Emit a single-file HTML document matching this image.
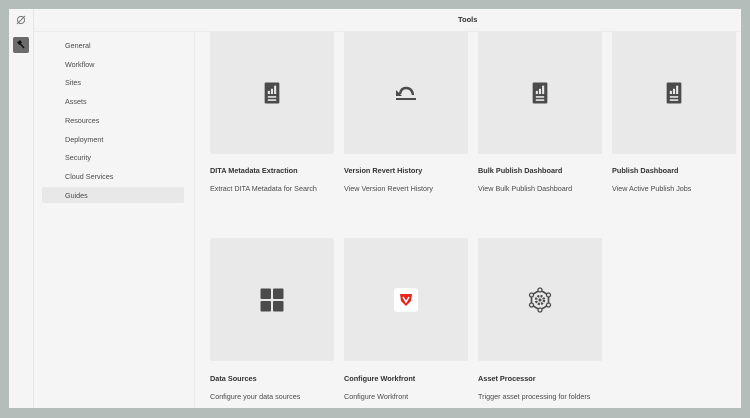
<!DOCTYPE html>
<html><head><style>
*{margin:0;padding:0;box-sizing:border-box}
body{width:750px;height:418px;background:#b4bdb9;position:relative;overflow:hidden;font-family:"Liberation Sans",sans-serif;color:#2c2c2c}
.app{position:absolute;left:9px;top:9px;width:732px;height:399px;background:#f5f5f5;overflow:hidden}
.rail{position:absolute;left:0;top:0;width:25px;height:399px;background:#f5f5f5;border-right:1px solid #e6e6e6}
.hdr{position:absolute;left:25px;top:0;right:0;height:23px;border-bottom:1px solid #ececec;background:#f5f5f5}
.hdr span{position:absolute;left:424px;top:6px;font-size:7.5px;font-weight:bold;color:#333}
.nav{position:absolute;left:25px;top:23px;width:161px;height:376px;border-right:1px solid #ececec}
.nav div{position:absolute;left:31px;font-size:7.2px;color:#4b4b4b}
.sel{position:absolute;left:8px;top:155px;width:142px;height:16px;background:#e8e8e8;border-radius:2px}
.card{position:absolute;width:124px;height:123px;background:#e9e9e9;border-radius:2px}
.t{position:absolute;font-size:7.3px;font-weight:bold;color:#333}
.d{position:absolute;font-size:7.2px;color:#4b4b4b}
.ic{position:absolute;left:50%;top:50%;transform:translate(-50%,-50%)}
</style></head><body><div class="app">
<div class="rail">
<svg style="position:absolute;left:7px;top:6px" width="10" height="10" viewBox="0 0 10 10"><circle cx="5" cy="5" r="3.6" fill="none" stroke="#777" stroke-width="1"/><line x1="1" y1="9" x2="9" y2="1" stroke="#777" stroke-width="1"/></svg>
<div style="position:absolute;left:4px;top:28px;width:16px;height:16px;background:#6b6b6b;border-radius:2px"></div>
<svg style="position:absolute;left:7px;top:31px" width="10" height="10" viewBox="0 0 10 10"><path d="M2 2.5L4 1L5 2.5L3.5 4Z M3.5 3L8 8" stroke="#111" stroke-width="1.4" fill="#111"/></svg>
</div>
<div class="hdr"><span>Tools</span></div>
<div class="nav">
<span class="sel"></span>
<div style="top:9px">General</div><div style="top:28px">Workflow</div><div style="top:46px">Sites</div><div style="top:65px">Assets</div><div style="top:84px">Resources</div><div style="top:103px">Deployment</div><div style="top:121px">Security</div><div style="top:140px">Cloud Services</div><div style="top:159px">Guides</div>
</div>

<div class="card" style="left:201px;top:22px"><svg class="ic" width="15" height="21" viewBox="0 0 14 20"><rect width="14" height="20" rx="1" fill="#4b4b4b"/><rect x="3" y="8" width="2" height="3" fill="#e9e9e9"/><rect x="6" y="6" width="2" height="5" fill="#e9e9e9"/><rect x="9" y="3" width="2" height="8" fill="#e9e9e9"/><rect x="3" y="13" width="8" height="1.5" fill="#e9e9e9"/><rect x="3" y="16" width="8" height="1.5" fill="#e9e9e9"/></svg></div>
<div class="card" style="left:335px;top:22px"><svg class="ic" width="22" height="16" viewBox="0 0 22 16"><path d="M5 9Q6 3 11 3Q17 3 18 10" fill="none" stroke="#4b4b4b" stroke-width="2.4"/><path d="M1 5L7 11L1 11Z" fill="#4b4b4b"/><rect x="1" y="13" width="20" height="2" fill="#4b4b4b"/></svg></div>
<div class="card" style="left:469px;top:22px"><svg class="ic" width="15" height="21" viewBox="0 0 14 20"><rect width="14" height="20" rx="1" fill="#4b4b4b"/><rect x="3" y="8" width="2" height="3" fill="#e9e9e9"/><rect x="6" y="6" width="2" height="5" fill="#e9e9e9"/><rect x="9" y="3" width="2" height="8" fill="#e9e9e9"/><rect x="3" y="13" width="8" height="1.5" fill="#e9e9e9"/><rect x="3" y="16" width="8" height="1.5" fill="#e9e9e9"/></svg></div>
<div class="card" style="left:603px;top:22px"><svg class="ic" width="15" height="21" viewBox="0 0 14 20"><rect width="14" height="20" rx="1" fill="#4b4b4b"/><rect x="3" y="8" width="2" height="3" fill="#e9e9e9"/><rect x="6" y="6" width="2" height="5" fill="#e9e9e9"/><rect x="9" y="3" width="2" height="8" fill="#e9e9e9"/><rect x="3" y="13" width="8" height="1.5" fill="#e9e9e9"/><rect x="3" y="16" width="8" height="1.5" fill="#e9e9e9"/></svg></div>
<div class="t" style="left:201px;top:157px">DITA Metadata Extraction</div><div class="d" style="left:201px;top:175px">Extract DITA Metadata for Search</div>
<div class="t" style="left:335px;top:157px">Version Revert History</div><div class="d" style="left:335px;top:175px">View Version Revert History</div>
<div class="t" style="left:469px;top:157px">Bulk Publish Dashboard</div><div class="d" style="left:469px;top:175px">View Bulk Publish Dashboard</div>
<div class="t" style="left:603px;top:157px">Publish Dashboard</div><div class="d" style="left:603px;top:175px">View Active Publish Jobs</div>

<div class="card" style="left:201px;top:229px"><svg class="ic" width="23" height="23" viewBox="0 0 23 23"><rect width="10.5" height="10.5" rx="1" fill="#4b4b4b"/><rect x="12.5" width="10.5" height="10.5" rx="1" fill="#4b4b4b"/><rect y="12.5" width="10.5" height="10.5" rx="1" fill="#4b4b4b"/><rect x="12.5" y="12.5" width="10.5" height="10.5" rx="1" fill="#4b4b4b"/></svg></div>
<div class="card" style="left:335px;top:229px"><svg class="ic" width="24" height="24" viewBox="0 0 24 24"><rect width="24" height="24" rx="3" fill="#fff"/><path d="M6 6L18 6L17 13L12 18L7 13Z" fill="#e8261d"/><path d="M9 9L12 14L15 9" fill="none" stroke="#fff" stroke-width="1.5"/></svg></div>
<div class="card" style="left:469px;top:229px"><svg class="ic" width="26" height="26" viewBox="0 0 26 26"><polygon points="13,3 21.5,8 21.5,18 13,23 4.5,18 4.5,8" fill="none" stroke="#4b4b4b" stroke-width="1.6"/><circle cx="13" cy="13" r="4" fill="none" stroke="#4b4b4b" stroke-width="2.4" stroke-dasharray="2 1.2"/><circle cx="13" cy="13" r="1.5" fill="#4b4b4b"/><g fill="#e9e9e9" stroke="#4b4b4b" stroke-width="1.3"><circle cx="13" cy="3" r="2"/><circle cx="21.5" cy="8" r="2"/><circle cx="21.5" cy="18" r="2"/><circle cx="13" cy="23" r="2"/><circle cx="4.5" cy="18" r="2"/><circle cx="4.5" cy="8" r="2"/></g></svg></div>
<div class="t" style="left:201px;top:365px">Data Sources</div><div class="d" style="left:201px;top:383px">Configure your data sources</div>
<div class="t" style="left:335px;top:365px">Configure Workfront</div><div class="d" style="left:335px;top:383px">Configure Workfront</div>
<div class="t" style="left:469px;top:365px">Asset Processor</div><div class="d" style="left:469px;top:383px">Trigger asset processing for folders</div>
</div></body></html>
